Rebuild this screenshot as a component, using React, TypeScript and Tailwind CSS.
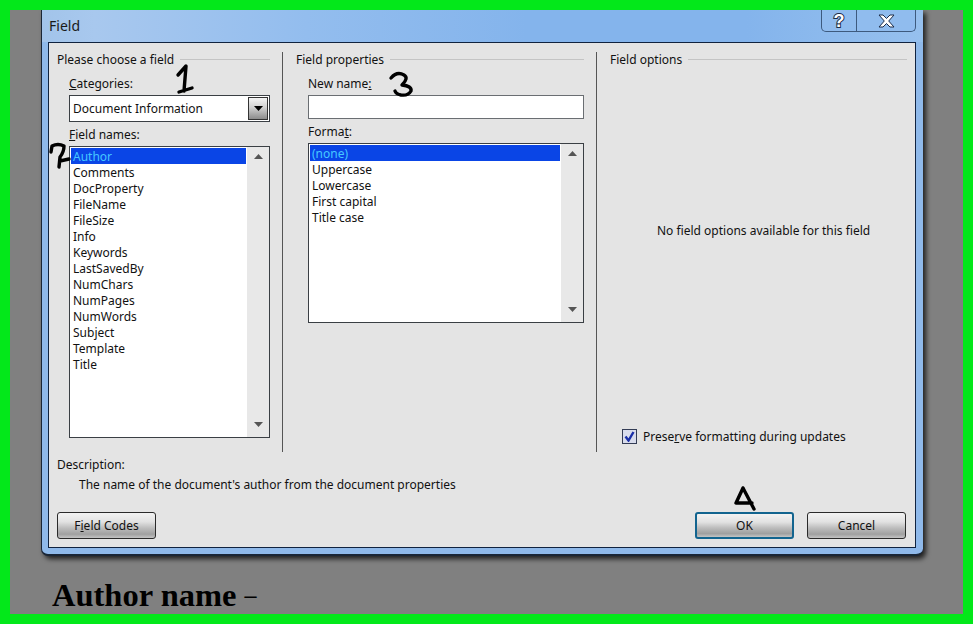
import React from "react";

const fieldNames = ["Author","Comments","DocProperty","FileName","FileSize","Info","Keywords","LastSavedBy","NumChars","NumPages","NumWords","Subject","Template","Title"];
const formats = ["(none)","Uppercase","Lowercase","First capital","Title case"];

function Arrow({ up, className }: { up?: boolean; className?: string }) {
  return (
    <svg width="9" height="5" viewBox="0 0 9 5" className={className}>
      <path d={up ? "M4.5 0L9 5H0Z" : "M0 0H9L4.5 5Z"} fill="currentColor" />
    </svg>
  );
}

function ListBox({ items, className }: { items: string[]; className: string }) {
  return (
    <div className={`flex border border-[#3a3f44] bg-white ${className}`}>
      <div className="flex-1 min-w-0 pl-px pt-px">
        {items.map((t, i) => (
          <div key={t} className={`h-4 pl-[2px] mr-px pt-px leading-4 whitespace-nowrap ${i === 0 ? "bg-[#0a45e6] text-[#45c8ff]" : ""}`}>{t}</div>
        ))}
      </div>
      <div className="w-[22px] bg-[#e8e8e8] flex flex-col items-center justify-between pt-[7px] pb-[10px] text-[#555]">
        <Arrow up />
        <Arrow />
      </div>
    </div>
  );
}

function GroupHead({ title }: { title: string }) {
  return (
    <div className="h-[14px] flex items-center gap-[6px] leading-[14px]">
      <span className="whitespace-nowrap pt-[2px]">{title}</span>
      <div className="flex-1 h-px bg-[#c4c4c4]" />
    </div>
  );
}

function Btn({ children, primary }: { children: React.ReactNode; primary?: boolean }) {
  return (
    <div className={`w-[99px] h-[27px] rounded-[3px] flex items-center justify-center bg-[linear-gradient(#f2f2f2_0%,#e2e2e2_35%,#bdbdbd_60%,#a0a0a0_85%,#c4c4c4_100%)] ${primary ? "border-2 border-[#12648f]" : "border border-[#2a2a2a]"}`}>
      <span>{children}</span>
    </div>
  );
}

export default function App() {
  return (
    <div className="relative w-[973px] h-[624px] overflow-hidden bg-[#808080] border-[10px] border-[#03e81a] font-['Noto_Sans','Open_Sans',sans-serif] text-[12px] text-[#111]">
      {/* dialog */}
      <div className="ml-[31px] w-[882px] h-[546px] rounded-b-[7px] bg-[#8fb9ea] border-l border-b-2 border-[#1a2636] shadow-[3px_3px_5px_rgba(0,0,0,0.75)] flex flex-col">
        <div className="h-[32px] flex justify-between pl-[7px] pr-[7px] bg-[linear-gradient(90deg,#a2c4ea_0%,#a8c8ee_6%,#93bdee_30%,#84b4ec_55%,#84b4ec_80%,#96c0ee_100%)]">
          <span className="text-[14px] leading-[32px] text-[#1a1a1a]">Field</span>
          <div className="flex h-[22px] border border-t-0 border-[#3d5a7e] rounded-b-[5px] bg-[#90bcee]">
            <div className="w-[35px] border-r border-[#3d5a7e] flex items-center justify-center">
              <span className="font-['Liberation_Sans',sans-serif] font-bold text-[18px] leading-[20px] text-white [-webkit-text-stroke:2px_#1c2c48] [paint-order:stroke]">?</span>
            </div>
            <div className="w-[58px] flex items-center justify-center">
              <svg width="17" height="14" viewBox="0 0 17 14">
                <path d="M1 1H5L8.5 4.5L12 1H16L10.7 7L16 13H12L8.5 9.5L5 13H1L6.3 7Z" fill="#fff" stroke="#1c2c48" strokeWidth="1" />
              </svg>
            </div>
          </div>
        </div>

        <div className="ml-[6px] w-[868px] h-[506px] border border-[#10233f] bg-[#e4e4e4] pl-2 pt-[9px] flex flex-col">
          <div className="flex h-[400px]">
            {/* column 1 */}
            <div className="w-[213px] flex flex-col">
              <GroupHead title="Please choose a field" />
              <div className="pl-3 flex flex-col">
                <div className="h-4 mt-[10px] leading-4"><u>C</u>ategories:</div>
                <div className="mt-[3px] h-[27px] border border-[#3a3f44] bg-white flex items-center pl-[3px] pr-px">
                  <span className="flex-1">Document Information</span>
                  <div className="w-[20px] h-[23px] border border-[#333] bg-[linear-gradient(#f4f4f4_0%,#d0d0d0_45%,#8c8c8c_100%)] flex items-center justify-center text-black">
                    <Arrow />
                  </div>
                </div>
                <div className="h-4 mt-1 pt-px leading-4"><u>F</u>ield names:</div>
                <ListBox items={fieldNames} className="mt-1 h-[292px]" />
              </div>
            </div>
            <div className="w-px bg-[#555] ml-3 mr-[13px]" />
            {/* column 2 */}
            <div className="w-[288px] flex flex-col">
              <GroupHead title="Field properties" />
              <div className="pl-3 flex flex-col">
                <div className="h-4 mt-[10px] leading-4">New name<u>:</u></div>
                <div className="mt-[3px] h-6 border border-[#6a6e72] bg-white" />
                <div className="h-4 mt-[4px] pt-px leading-4">Forma<u>t</u>:</div>
                <ListBox items={formats} className="mt-1 h-[180px]" />
              </div>
            </div>
            <div className="w-px bg-[#555] ml-3 mr-[13px]" />
            {/* column 3 */}
            <div className="w-[297px] flex flex-col">
              <GroupHead title="Field options" />
              <div className="pl-[47px] mt-[156px] h-4 pt-px leading-4 whitespace-nowrap">No field options available for this field</div>
              <div className="mt-auto mb-2 pl-3 h-4 flex items-center gap-[6px]">
                <div className="w-[15px] h-[15px] border border-[#333c55] bg-[#d8dcec] flex items-center justify-center">
                  <svg width="11" height="11" viewBox="0 0 11 11">
                    <path d="M1.5 5.5L4.5 9.5L9.5 1" fill="none" stroke="#1a2fa8" strokeWidth="2.4" />
                  </svg>
                </div>
                <span className="leading-4 pt-[2px]">Prese<u>r</u>ve formatting during updates</span>
              </div>
            </div>
          </div>
          <div className="h-4 mt-1 pt-px leading-4">Description:</div>
          <div className="h-4 mt-1 pt-px pl-[22px] leading-4">The name of the document's author from the document properties</div>
          <div className="flex mt-[20px]">
            <Btn>F<u>i</u>eld Codes</Btn>
            <div className="ml-[539px]"><Btn primary>OK</Btn></div>
            <div className="ml-[13px]"><Btn>Cancel</Btn></div>
          </div>
        </div>
      </div>

      <div className="mt-[21px] ml-[42px] h-9 flex items-center font-['Liberation_Serif',serif] text-black whitespace-nowrap">
        <span className="font-bold text-[32.5px]">Author name</span>
        <span className="ml-[8px] text-[24px] font-bold">–</span>
      </div>

      {/* handwritten callouts drawn over the dialog */}
      <svg className="absolute -left-[10px] -top-[10px] pointer-events-none" width="973" height="624" viewBox="0 0 973 624" fill="none" stroke="#000" strokeWidth="3.4" strokeLinecap="round" strokeLinejoin="round">
        <path d="M178 75L186 66L184 91M179 92L192 88" />
        <path d="M51 152L52 146Q58 143 64 146Q64 152 60 157L59 167M60 161L69 159" />
        <path d="M391 78Q397 71 404 75Q409 78 402 85Q412 86 411 91Q408 96 401 95Q396 94 395 91" />
        <path d="M743 488L736 503L752 503M743 488L754 509" />
      </svg>
    </div>
  );
}
